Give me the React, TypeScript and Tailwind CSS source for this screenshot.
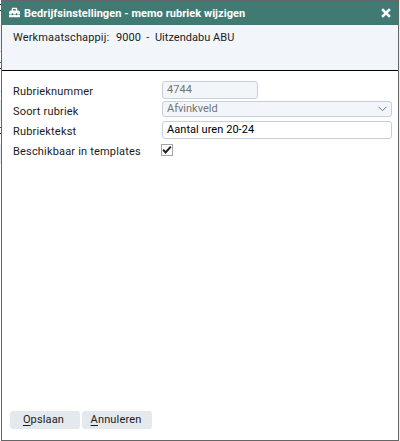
import React from 'react'
import { FaToolbox } from 'react-icons/fa'

type RowProps = {
  label: string
  className?: string
  children: React.ReactNode
}

function Row({ label, className = '', children }: RowProps) {
  return (
    <div className={'flex items-start ' + className}>
      <label className="w-[149px] shrink-0 pt-[4px] leading-[14px] tracking-[0.18px] whitespace-pre">{label}</label>
      {children}
    </div>
  )
}

type ButtonProps = {
  hotkey: string
  text: string
  className?: string
}

function DialogButton({ hotkey, text, className = '' }: ButtonProps) {
  return (
    <button type="button" className={'h-[18px] w-[70px] rounded-[3px] bg-[#e3e9ec] pb-px leading-[15px] tracking-[0.15px] ' + className}>
      <span className="underline underline-offset-2">{hotkey}</span>{text}
    </button>
  )
}

export default function App() {
  return (
    <div className="flex h-[441px] w-[400px] overflow-hidden bg-[#eeeff0] font-['Roboto','Liberation_Sans',sans-serif] text-[11px] text-[#1b1b1b]">
      {/* sliver of the page behind the dialog */}
      <div className="flex w-px shrink-0 flex-col bg-white">
        <div className="mt-[4px] h-px bg-[#1b2a44]" />
        <div className="mt-[5px] h-px bg-[#1b2a44]" />
        <div className="mt-[14px] h-[25px] bg-[#f0f2f3]" />
        <div className="mt-px h-px bg-[#c5c9cc]" />
        <div className="mt-[10px] h-px bg-[#2b6d9e]" />
        <div className="mt-[5px] h-px bg-[#3b2020]" />
        <div className="mt-[22px] h-px bg-[#d5d8da]" />
        <div className="mt-[8px] h-[21px] bg-[#e9edef]" />
        <div className="mt-[6px] h-px bg-[#2a4a8c]" />
        <div className="mt-[5px] h-px bg-[#2a1a2a]" />
        <div className="mt-[10px] h-[20px] bg-[#e9edef]" />
      </div>
      <div className="flex h-[441px] w-[398px] flex-col border border-[#646668] bg-white">
        {/* title bar */}
        <div className="flex h-6 shrink-0 items-center bg-[#417a73] pr-[7px] pl-[7px] text-white">
          <FaToolbox className="mb-px h-[11px] w-[11px]" />
          <span className="ml-[4px] flex-1 pt-[2px] font-bold tracking-[0.06px] whitespace-pre">Bedrijfsinstellingen - memo rubriek wijzigen</span>
          <svg width="10" height="10" viewBox="0 0 10 10" fill="none" stroke="currentColor" strokeWidth="2.7">
            <path d="M1.1 1.1L8.9 8.9M8.9 1.1L1.1 8.9" />
          </svg>
        </div>
        {/* company */}
        <div className="flex h-[46px] shrink-0 border-b border-black bg-[#f2f6fa] pt-[6px] pl-[11px] leading-[14px] whitespace-pre">
          <span className="w-[103px] tracking-[0.15px]">Werkmaatschappij:</span>
          <span className="tracking-[0.03px]">9000  -  Uitzendabu ABU</span>
        </div>

        <div className="flex flex-1 flex-col pt-[10px] pl-[11px]">
          <Row label="Rubrieknummer" className="h-5">
            <input
              readOnly
              value="4744"
              className="h-[18px] w-24 rounded-[3px] border border-[#c5d0d9] bg-[#f2f6fa] px-1 pb-px tracking-[0.05px] text-[#747474]"
            />
          </Row>
          <Row label="Soort rubriek" className="h-5">
            <div className="flex h-4 w-[230px] items-center rounded-[3px] border border-[#c5d0d9] bg-[#f2f6fa] pr-[4px] pl-1 text-[#747474]">
              <span className="flex-1 leading-[14px]">Afvinkveld</span>
              <svg width="9" height="6" viewBox="0 0 9 6" fill="none" stroke="#777" strokeWidth="1">
                <path d="M0.5 0.7L4.5 4.7L8.5 0.7" />
              </svg>
            </div>
          </Row>
          <Row label="Rubriektekst" className="h-5">
            <input
              defaultValue="Aantal uren 20-24"
              className="h-[18px] w-[230px] rounded-[3px] border border-[#c5d0d9] bg-white px-1 pb-px tracking-[0.05px] text-black"
            />
          </Row>
          <Row label="Beschikbaar in templates" className="h-5">
            <span className="mt-[3px] -ml-px flex h-3 w-3 items-center justify-center border border-[#a5a5a5] bg-white">
              <svg width="10" height="10" viewBox="0 0 10 10" fill="none" stroke="#222" strokeWidth="2">
                <path d="M1.2 4.8L3.6 7.4L8.8 1.6" />
              </svg>
            </span>
          </Row>
        </div>

        <div className="flex shrink-0 gap-[2px] pb-[11px] pl-2">
          <DialogButton hotkey="O" text="pslaan" className="pr-[3px]" />
          <DialogButton hotkey="A" text="nnuleren" className="pr-[2px]" />
        </div>
      </div>
    </div>
  )
}
